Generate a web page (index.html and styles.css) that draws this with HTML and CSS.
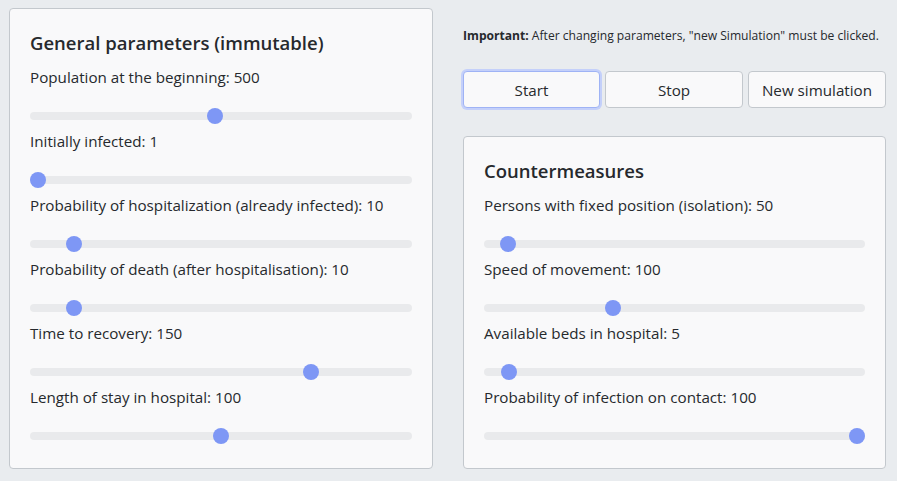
FILE: index.html
```html
<!DOCTYPE html>
<html lang="en">
<head>
<meta charset="utf-8">
<title>Simulation</title>
<link rel="stylesheet" href="styles.css">
</head>
<body>
<div class="page">
  <section class="card">
    <h2 class="card-title">General parameters (immutable)</h2>
    <div class="param">
      <div class="label">Population at the beginning: 500</div>
      <div class="track"><span class="thumb" style="--p:0.484"></span></div>
    </div>
    <div class="param">
      <div class="label">Initially infected: 1</div>
      <div class="track"><span class="thumb" style="--p:0"></span></div>
    </div>
    <div class="param">
      <div class="label">Probability of hospitalization (already infected): 10</div>
      <div class="track"><span class="thumb" style="--p:0.098"></span></div>
    </div>
    <div class="param">
      <div class="label">Probability of death (after hospitalisation): 10</div>
      <div class="track"><span class="thumb" style="--p:0.098"></span></div>
    </div>
    <div class="param">
      <div class="label">Time to recovery: 150</div>
      <div class="track"><span class="thumb" style="--p:0.746"></span></div>
    </div>
    <div class="param">
      <div class="label">Length of stay in hospital: 100</div>
      <div class="track"><span class="thumb" style="--p:0.5"></span></div>
    </div>
  </section>
  <div class="side">
    <p class="note"><strong>Important:</strong> After changing parameters, "new Simulation" must be clicked.</p>
    <div class="buttons">
      <button class="btn btn-focus">Start</button>
      <button class="btn">Stop</button>
      <button class="btn">New simulation</button>
    </div>
    <section class="card">
      <h2 class="card-title">Countermeasures</h2>
      <div class="param">
        <div class="label">Persons with fixed position (isolation): 50</div>
        <div class="track"><span class="thumb" style="--p:0.044"></span></div>
      </div>
      <div class="param">
        <div class="label">Speed of movement: 100</div>
        <div class="track"><span class="thumb" style="--p:0.332"></span></div>
      </div>
      <div class="param">
        <div class="label">Available beds in hospital: 5</div>
        <div class="track"><span class="thumb" style="--p:0.047"></span></div>
      </div>
      <div class="param">
        <div class="label">Probability of infection on contact: 100</div>
        <div class="track"><span class="thumb" style="--p:1"></span></div>
      </div>
    </section>
  </div>
</div>
</body>
</html>
```
FILE: styles.css
```css
* { box-sizing: border-box; }
html, body { margin: 0; padding: 0; }
body {
  background: #e9ecef;
  color: #26292d;
  font-family: "Open Sans", "Noto Sans", sans-serif;
  font-size: 15.2px;
  width: 897px;
  height: 481px;
  overflow: hidden;
}
.page {
  display: grid;
  grid-template-columns: 424px 423px;
  column-gap: 30px;
  padding: 8px 0 0 9px;
  align-items: end;
}
.card {
  background: #f9f9fa;
  border: 1px solid #c3c8cd;
  border-radius: 4px;
  padding: 20px 20px 26px 20px;
}
.card-title {
  margin: 0;
  font-size: 18.5px;
  font-weight: 600;
  line-height: 28px;
}
.param { margin-top: 9px; }
.card-title + .param { margin-top: 8px; }
.label { line-height: 24px; }
.track {
  position: relative;
  height: 8px;
  border-radius: 4px;
  background: #e9eaec;
  margin-top: 23px;
  margin-bottom: 2px;
}
.thumb {
  position: absolute;
  top: -4px;
  left: calc(var(--p) * (100% - 16px));
  width: 16px;
  height: 16px;
  border-radius: 50%;
  background: #7e97f5;
}
.side {
  display: flex;
  flex-direction: column;
}
.note {
  margin: 16px 0 0 0;
  font-size: 12.1px;
  line-height: 18px;
}
.note strong { font-weight: 700; }
.buttons {
  display: flex;
  gap: 5px;
  margin-top: 26px;
  margin-bottom: 28px;
}
.btn {
  flex: 0 0 138px;
  height: 37px;
  font-family: inherit;
  font-size: 15.2px;
  color: #26292d;
  background: #f9f9fa;
  border: 1px solid #c3c8cd;
  border-radius: 4px;
  padding: 0;
}
.btn:first-child { flex-basis: 137px; }
.btn-focus {
  border-color: #9fb3f5;
  box-shadow: 0 0 0 2px #c4d0fa;
}
```
